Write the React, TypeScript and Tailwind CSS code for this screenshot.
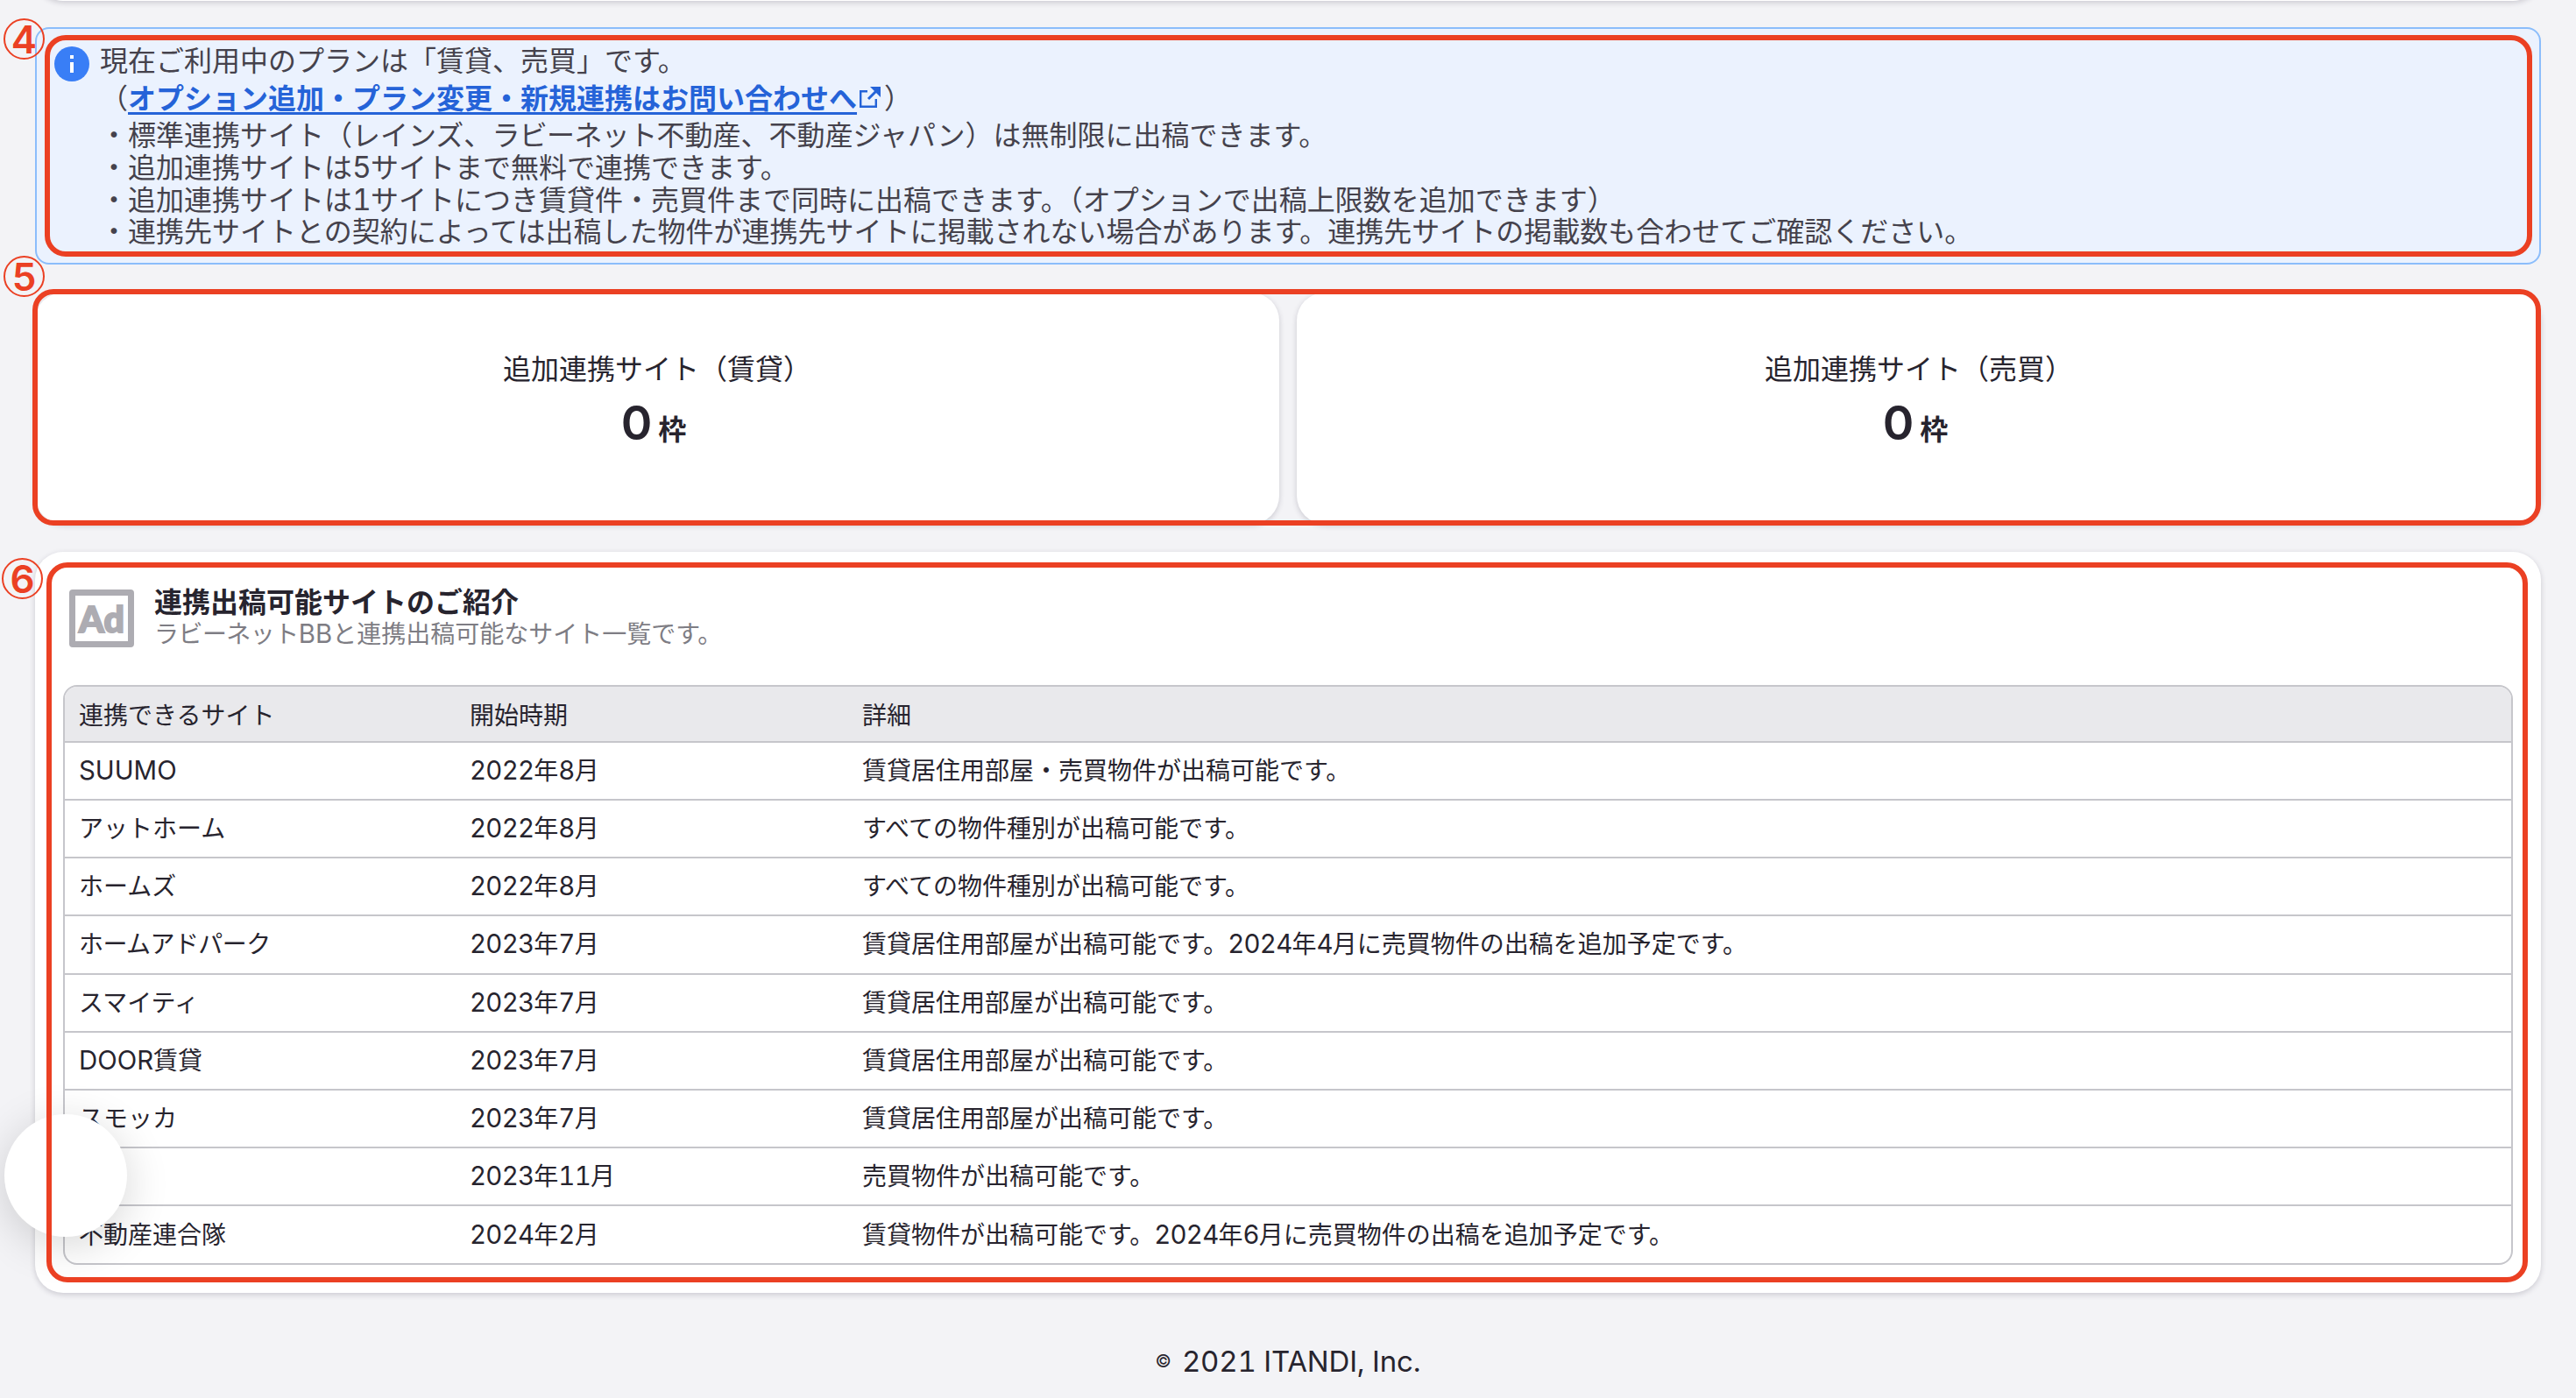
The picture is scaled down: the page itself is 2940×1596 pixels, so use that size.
import { Fragment } from 'react'
import type { ReactNode } from 'react'

const sites = [
  { name: 'SUUMO', start: '2022年8月', detail: '賃貸居住用部屋・売買物件が出稿可能です。' },
  { name: 'アットホーム', start: '2022年8月', detail: 'すべての物件種別が出稿可能です。' },
  { name: 'ホームズ', start: '2022年8月', detail: 'すべての物件種別が出稿可能です。' },
  {
    name: 'ホームアドパーク',
    start: '2023年7月',
    detail: '賃貸居住用部屋が出稿可能です。2024年4月に売買物件の出稿を追加予定です。',
  },
  { name: 'スマイティ', start: '2023年7月', detail: '賃貸居住用部屋が出稿可能です。' },
  { name: 'DOOR賃貸', start: '2023年7月', detail: '賃貸居住用部屋が出稿可能です。' },
  { name: 'スモッカ', start: '2023年7月', detail: '賃貸居住用部屋が出稿可能です。' },
  { name: '', start: '2023年11月', detail: '売買物件が出稿可能です。' },
  {
    name: '不動産連合隊',
    start: '2024年2月',
    detail: '賃貸物件が出稿可能です。2024年6月に売買物件の出稿を追加予定です。',
  },
]

// Latin runs are set slightly larger, long katakana words a bit tighter
function Mixed({ children }: { children: string }) {
  return (
    <>
      {children.split(/([0-9]+|[A-Z]+|ラビーネット|ホームアドパーク)/).map((part, i) => {
        if (i % 2 === 0) return <Fragment key={i}>{part}</Fragment>
        if (/[0-9]/.test(part)) {
          return (
            <span key={i} className="text-[1.05em] leading-none tracking-[-0.025em] tabular-nums">
              {part}
            </span>
          )
        }
        if (/[A-Z]/.test(part)) {
          return (
            <span key={i} className="text-[1.05em] leading-none">
              {part}
            </span>
          )
        }
        return (
          <span key={i} className="tracking-[-0.02em]">
            {part}
          </span>
        )
      })}
    </>
  )
}

function InfoIcon() {
  return (
    <svg viewBox="0 0 40 40" className="size-10 shrink-0">
      <circle cx="20" cy="20" r="20" fill="#397ef6" />
      <rect x="18" y="10" width="4" height="4" fill="#fff" />
      <rect x="18" y="18" width="4" height="12" fill="#fff" />
    </svg>
  )
}

function ExternalIcon() {
  return (
    <svg viewBox="0 0 28 28" className="mr-[3px] inline-block size-7 align-[-1px]">
      <path
        d="M12 7.2H4.2v17.6h17.6V16"
        fill="none"
        stroke="#2563d8"
        strokeWidth="2.4"
      />
      <path d="M13 16 22 7" fill="none" stroke="#2563d8" strokeWidth="3" />
      <path d="M15 2h12v12z" fill="#2563d8" />
    </svg>
  )
}

function AdIcon() {
  return (
    <div className="flex h-[66px] w-[74px] shrink-0 items-center justify-center rounded-[4px] border-[7px] border-[#adacb2] font-['Lato'] text-[41px] leading-none font-black text-[#adacb2] [-webkit-text-stroke:2px_#adacb2]">
      Ad
    </div>
  )
}

function QuotaCard({ title }: { title: string }) {
  return (
    <div className="flex h-[264px] flex-1 flex-col items-center rounded-[32px] bg-white pt-[64px] shadow-[0_2px_6px_rgba(39,36,60,0.2)]">
      <h2 className="text-[32px] leading-[48px]">{title}</h2>
      <p className="mr-2 flex items-baseline gap-[7px] leading-[73px] font-bold">
        <span className="text-[54px] font-semibold">0</span>
        <span className="text-[32px]">枠</span>
      </p>
    </div>
  )
}

// Numbered red frame that lies over a section
function Callout({ frame, badge, children }: { frame: string; badge: string; children: ReactNode }) {
  return (
    <>
      <div className={`absolute rounded-[24px] border-[6px] border-[#eb4023] ${frame}`} />
      <div
        className={`absolute flex size-[47px] items-center justify-center rounded-full border-2 border-[#eb4023] text-[44px] leading-none font-semibold text-[#eb4023] ${badge}`}
      >
        {children}
      </div>
    </>
  )
}

export default function App() {
  return (
    <div className="relative h-[1596px] w-[2940px] overflow-hidden bg-[#f3f3f6] px-10 font-['Inter','Noto_Sans_CJK_JP',sans-serif] text-[#27242e]">
      <div className="-mt-[63px] h-16 rounded-[32px] bg-white shadow-[0_2px_6px_rgba(39,36,60,0.2)]" />

      <section className="mt-[30px] flex h-[271px] gap-3 rounded-[16px] border-2 border-[#8bbdfb] bg-[#ebf2fe] pt-5 pl-5 text-[32px] text-[#45424c]">
        <InfoIcon />
        <div>
          <p className="-mt-[4px] h-[42px] leading-[42px]">現在ご利用中のプランは「賃貸、売買」です。</p>
          <p className="h-[43px] leading-[43px]">
            （
            <a
              href="#"
              className="font-bold text-[#2563d8] underline decoration-[3px] underline-offset-[4px] [text-decoration-skip-ink:none]"
            >
              オプション追加・プラン変更・新規連携はお問い合わせへ
            </a>
            <ExternalIcon />）
          </p>
          <ul className="mt-[3px] leading-[36.8px]">
            <li>
              <Mixed>
                ・標準連携サイト（レインズ、ラビーネット不動産、不動産ジャパン）は無制限に出稿できます。
              </Mixed>
            </li>
            <li>
              <Mixed>・追加連携サイトは5サイトまで無料で連携できます。</Mixed>
            </li>
            <li>
              <Mixed>
                ・追加連携サイトは1サイトにつき賃貸件・売買件まで同時に出稿できます。（オプションで出稿上限数を追加できます）
              </Mixed>
            </li>
            <li>
              ・連携先サイトとの契約によっては出稿した物件が連携先サイトに掲載されない場合があります。連携先サイトの掲載数も合わせてご確認ください。
            </li>
          </ul>
        </div>
      </section>

      <section className="mt-8 flex gap-5">
        <QuotaCard title="追加連携サイト（賃貸）" />
        <QuotaCard title="追加連携サイト（売買）" />
      </section>

      <section className="mt-8 h-[846px] rounded-[32px] bg-white px-8 pt-[38px] shadow-[0_2px_6px_rgba(39,36,60,0.2)]">
        <header className="flex h-[114px] gap-[23px] pt-[5px] pl-[7px]">
          <AdIcon />
          <div className="-mt-[4px]">
            <h2 className="text-[32px] leading-[38px] font-bold">連携出稿可能サイトのご紹介</h2>
            <p className="text-[28px] leading-[35px] text-[#7e7d84]">
              <Mixed>ラビーネットBBと連携出稿可能なサイト一覧です。</Mixed>
            </p>
          </div>
        </header>
        <div className="h-[662px] overflow-hidden rounded-[16px] border-2 border-[#c6c6cb] text-[28px]">
          <div className="grid h-16 grid-cols-[446px_448px_1fr] items-center border-b-2 border-[#c6c6cb] bg-[#e9e9ec] pt-[3px] *:pl-4">
            <span>連携できるサイト</span>
            <span>開始時期</span>
            <span>詳細</span>
          </div>
          {sites.map((site) => (
            <div
              key={site.detail + site.start + site.name}
              className="grid h-[66.15px] grid-cols-[446px_448px_1fr] items-center border-b-2 border-[#c6c6cb] *:pl-4 last:border-b-0"
            >
              <span>
                <Mixed>{site.name}</Mixed>
              </span>
              <span>
                <Mixed>{site.start}</Mixed>
              </span>
              <span>
                <Mixed>{site.detail}</Mixed>
              </span>
            </div>
          ))}
        </div>
      </section>

      <footer className="mt-[54px] flex items-center justify-center gap-[12px] text-[33px] leading-[48px]">
        <small className="text-[20px] leading-none">©</small>
        <span className="tracking-[-0.2px] tabular-nums">2021 ITANDI, Inc.</span>
      </footer>

      {/* floating button */}
      <div className="absolute top-[1272px] left-[5px] size-[140px] rounded-full bg-white shadow-[0_10px_50px_rgba(0,0,0,0.16)]" />

      <Callout frame="top-[40px] left-[51px] h-[253px] w-[2839px]" badge="top-[21px] left-[4px]">
        4
      </Callout>
      <Callout frame="top-[330px] left-[37px] h-[270px] w-[2863px]" badge="top-[292px] left-[4px]">
        5
      </Callout>
      <Callout frame="top-[642px] left-[53px] h-[822px] w-[2832px]" badge="top-[637px] left-[2px]">
        6
      </Callout>
    </div>
  )
}
